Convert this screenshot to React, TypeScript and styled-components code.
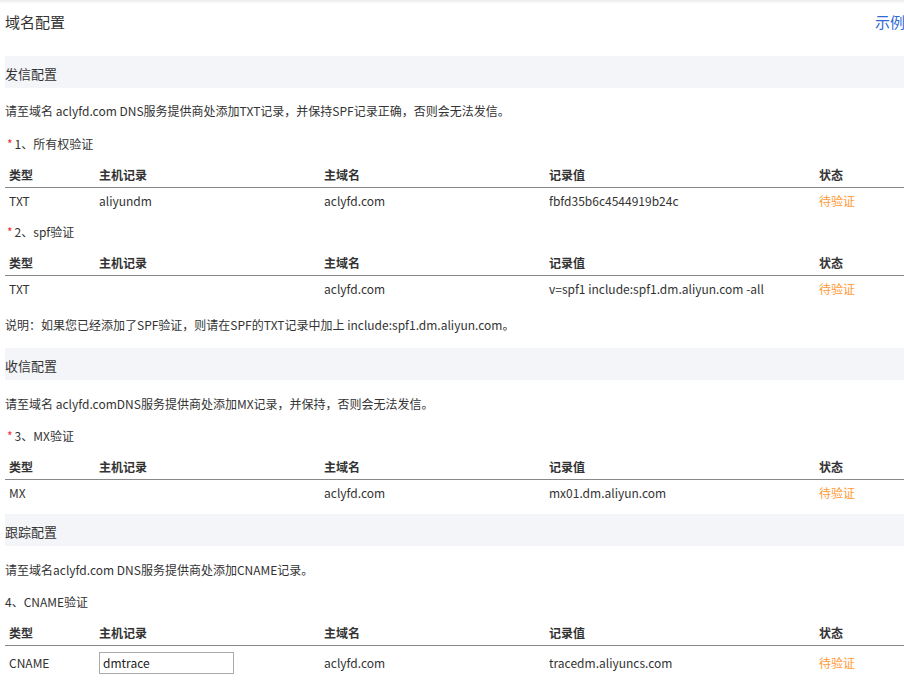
import React from "react";
import styled, { createGlobalStyle } from "styled-components";

const Global = createGlobalStyle`
  html, body { margin: 0; padding: 0; background: #fff; overflow: hidden; }
  body { font-family: "Noto Sans CJK SC", "Noto Sans", sans-serif; color: #333; font-size: 12px; }
`;

const Page = styled.div`
  width: 904px;
  height: 684px;
  overflow: hidden;
  display: flex;
  flex-direction: column;
`;

const TopShade = styled.div`
  height: 4px;
  background: linear-gradient(#ececec, #fff);
`;

const Content = styled.div`
  margin-left: 5px;
  width: 900px;
  display: flex;
  flex-direction: column;
`;

const TitleRow = styled.div`
  height: 34px;
  display: flex;
  align-items: center;
  justify-content: space-between;
`;

const Title = styled.h1`
  margin: 0;
  font-size: 15px;
  font-weight: normal;
  color: #333;
`;

const ExampleLink = styled.a`
  font-size: 15px;
  color: #2f6bd3;
  text-decoration: none;
  cursor: pointer;
`;

const Bar = styled.div<{ $mt: number }>`
  margin-top: ${(p) => p.$mt}px;
  height: 32px;
  box-sizing: border-box;
  padding-top: 3px;
  display: flex;
  align-items: center;
  background: #f4f5f8;
  font-size: 13px;
  color: #333;
`;

const Para = styled.p<{ $mt: number }>`
  margin: ${(p) => p.$mt}px 0 0;
  line-height: 20px;
  font-size: 12px;
  color: #333;
`;

const Label = styled.div<{ $mt: number }>`
  margin-top: ${(p) => p.$mt}px;
  line-height: 20px;
  font-size: 12px;
  color: #333;
  display: flex;
  align-items: center;
`;

const Star = styled.span`
  color: #f0302f;
  margin-left: 2px;
  margin-right: 2px;
  font-size: 12px;
`;

const Grid = styled.div`
  margin-top: 7px;
  display: grid;
  grid-template-columns: 90px 225px 225px 270px 1fr;
`;

const HeadCell = styled.div`
  height: 26px;
  display: flex;
  align-items: center;
  padding-left: 4px;
  font-weight: bold;
  font-size: 12px;
  color: #333;
  border-bottom: 1px solid #888;
`;

const Cell = styled.div<{ $tall?: boolean }>`
  height: ${(p) => (p.$tall ? 32 : 25)}px;
  display: flex;
  align-items: center;
  padding-left: 4px;
  font-size: 12px;
  color: #333;
`;

const Status = styled(Cell)`
  color: #ff9a33;
`;

const HostInput = styled.input`
  box-sizing: border-box;
  width: 135px;
  height: 22px;
  margin-top: 1px;
  padding: 0 0 0 3px;
  border: 1px solid #aaa;
  border-radius: 0;
  font-family: "Noto Sans CJK SC", "Noto Sans", sans-serif;
  font-size: 12px;
  color: #222;
  outline: none;
`;

type Row = { type: string; host?: string; domain: string; value: string; input?: boolean };

const heads = ["类型", "主机记录", "主域名", "记录值", "状态"];

function RecordTable({ row }: { row: Row }) {
  return (
    <Grid>
      {heads.map((h) => (
        <HeadCell key={h}>{h}</HeadCell>
      ))}
      <Cell $tall={row.input}>{row.type}</Cell>
      <Cell $tall={row.input}>
        {row.input ? <HostInput defaultValue={row.host} /> : row.host}
      </Cell>
      <Cell $tall={row.input}>{row.domain}</Cell>
      <Cell $tall={row.input}>{row.value}</Cell>
      <Status $tall={row.input}>待验证</Status>
    </Grid>
  );
}

export default function App() {
  return (
    <Page>
      <Global />
      <TopShade />
      <Content>
        <TitleRow>
          <Title>域名配置</Title>
          <ExampleLink>示例</ExampleLink>
        </TitleRow>

        <Bar $mt={18}>发信配置</Bar>
        <Para $mt={13}>请至域名 aclyfd.com DNS服务提供商处添加TXT记录，并保持SPF记录正确，否则会无法发信。</Para>
        <Label $mt={13}>
          <Star>*</Star>1、所有权验证
        </Label>
        <RecordTable row={{ type: "TXT", host: "aliyundm", domain: "aclyfd.com", value: "fbfd35b6c4544919b24c" }} />
        <Label $mt={9}>
          <Star>*</Star>2、spf验证
        </Label>
        <RecordTable row={{ type: "TXT", host: "", domain: "aclyfd.com", value: "v=spf1 include:spf1.dm.aliyun.com -all" }} />
        <Para $mt={14}>说明：如果您已经添加了SPF验证，则请在SPF的TXT记录中加上 include:spf1.dm.aliyun.com。</Para>

        <Bar $mt={13}>收信配置</Bar>
        <Para $mt={14}>请至域名 aclyfd.comDNS服务提供商处添加MX记录，并保持，否则会无法发信。</Para>
        <Label $mt={12}>
          <Star>*</Star>3、MX验证
        </Label>
        <RecordTable row={{ type: "MX", host: "", domain: "aclyfd.com", value: "mx01.dm.aliyun.com" }} />

        <Bar $mt={9}>跟踪配置</Bar>
        <Para $mt={14}>请至域名aclyfd.com DNS服务提供商处添加CNAME记录。</Para>
        <Label $mt={12}>4、CNAME验证</Label>
        <RecordTable row={{ type: "CNAME", host: "dmtrace", domain: "aclyfd.com", value: "tracedm.aliyuncs.com", input: true }} />
      </Content>
    </Page>
  );
}
